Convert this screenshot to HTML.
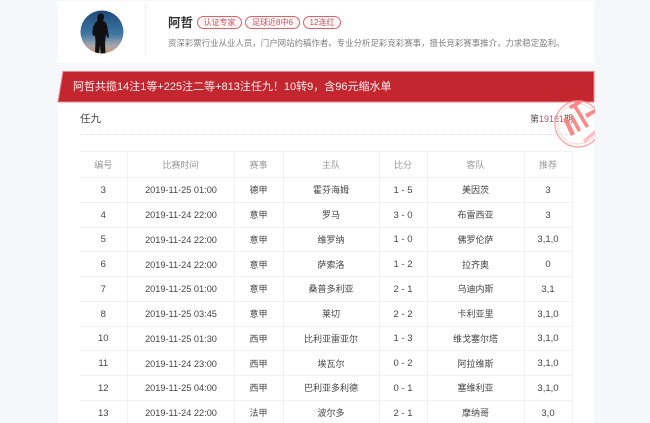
<!DOCTYPE html>
<html lang="zh">
<head>
<meta charset="utf-8">
<style>
html,body{margin:0;padding:0;width:650px;height:423px;overflow:hidden;background:#f6f7fb;}
body{position:relative;font-family:"Liberation Sans","Noto Sans CJK SC",sans-serif;color:#444;}
.abs{position:absolute;white-space:nowrap;}
.card{position:absolute;left:58px;top:1px;width:536px;background:#fff;}
.tag{position:absolute;top:16px;height:11px;line-height:11px;border:1px solid #d9636b;border-radius:7px;background:#fdf5f5;color:#c9565e;font-size:8px;text-align:center;white-space:nowrap;}
table{position:absolute;left:80px;top:151px;border-collapse:collapse;table-layout:fixed;width:492px;font-size:9px;color:#444;}
td,th{border:1px solid #f0f1f6;padding:1px 0 0;text-align:center;font-weight:normal;height:22.75px;line-height:14px;white-space:nowrap;overflow:hidden;}
td:nth-child(2){font-size:9.2px;padding-left:1px;}
td:nth-child(1),td:nth-child(5),td:nth-child(7){font-size:9.5px;padding-top:2px;height:21.75px;}
th{color:#999;height:24px;}
tr>*:first-child{border-left:none;}
</style>
</head>
<body>
<div class="card" style="height:62px;"></div>
<div class="card" style="top:102px;height:321px;"></div>
<div class="abs" style="left:145px;top:4px;height:54px;border-left:1px dotted #e6e6e6;"></div>

<svg class="abs" style="left:80px;top:10px" width="44" height="44" viewBox="0 0 44 44">
<defs>
<linearGradient id="g" x1="0" y1="0" x2="0" y2="1">
<stop offset="0" stop-color="#1d4a78"/>
<stop offset=".55" stop-color="#3f77a3"/>
<stop offset=".8" stop-color="#a3a6ad"/>
<stop offset="1" stop-color="#d79a6c"/>
</linearGradient>
<clipPath id="c"><circle cx="22" cy="22" r="21.500"/></clipPath>
</defs>
<g clip-path="url(#c)">
<rect width="44" height="44" fill="url(#g)"/>
<path d="M20 3.500C22 3 24 4 24 7C24 9 23 10 23 11C26 12 27 14 27.500 18L29 27L27.500 28L26 24L25 33L25.500 44H20.500L20 35L19 44H15L15.500 31L15 26C13 26 12 24 12.500 21C13 17 14 13 17 11.500C17.500 10 17 8 17.500 6C18 4.500 19 4 20 3.500Z" fill="#101013"/>
</g>
</svg>

<div class="abs" style="left:168px;top:13px;font-size:12.500px;font-weight:bold;line-height:20px;color:#333;">阿哲</div>
<div class="tag" style="left:197px;width:43px;">认证专家</div>
<div class="tag" style="left:245px;width:53px;">足球近8中6</div>
<div class="tag" style="left:303px;width:36px;">12连红</div>
<div class="abs" style="left:168px;top:36px;font-size:8.450px;line-height:14px;color:#808080;">资深彩票行业从业人员，门户网站约稿作者。专业分析足彩竞彩赛事，擅长竞彩赛事推介，力求稳定盈利。</div>

<svg class="abs" style="left:56px;top:70px" width="540" height="34" viewBox="0 0 540 34">
<path d="M7 1.500H538V32H2Z" fill="#c4262f" stroke="#e8858a" stroke-width="1"/>
</svg>
<div class="abs" style="left:73px;top:79px;font-size:11px;line-height:17px;color:#fdf2f2;">阿哲共揽14注1等+225注二等+813注任九！10转9，含96元缩水单</div>

<div class="abs" style="left:80px;top:111px;font-size:10.500px;line-height:17px;color:#444;">任九</div>
<div class="abs" style="left:530px;top:112px;font-size:9px;line-height:14px;color:#555;">第<span style="color:#b4536c">19161</span>期</div>
<div class="abs" style="left:80px;top:134px;width:492px;border-top:1px dotted #e2e2e2;"></div>

<svg class="abs" style="left:552px;top:97px" width="43" height="54" viewBox="0 0 43 54">
<circle cx="26" cy="27" r="23" fill="none" stroke="#fb9c9c" stroke-width="1.500" opacity=".85"/>
<circle cx="26" cy="27" r="20" fill="none" stroke="#fdcaca" stroke-width="1" opacity=".8"/>
<g fill="#fa7f7f" opacity=".92">
<path d="M17 9L28 3L29.500 6L25 9L37 29L34 31L22 11L18.500 12Z"/>
<path d="M11 22L15 20L23 37L19 39Z"/>
<path d="M18 20L21 18L29 33L26 35Z"/>
<path d="M33 17L43 12V16L35 21Z"/>
<path d="M31 43L43 33V37L33 46Z" opacity=".55"/>
</g>
</svg>

<table>
<colgroup>
<col style="width:47px"><col style="width:107px"><col style="width:49px"><col style="width:96px"><col style="width:48px"><col style="width:97px"><col style="width:48px">
</colgroup>
<tr><th>编号</th><th>比赛时间</th><th>赛事</th><th>主队</th><th>比分</th><th>客队</th><th>推荐</th></tr>
<tr><td>3</td><td>2019-11-25 01:00</td><td>德甲</td><td>霍芬海姆</td><td>1 - 5</td><td>美因茨</td><td>3</td></tr>
<tr><td>4</td><td>2019-11-24 22:00</td><td>意甲</td><td>罗马</td><td>3 - 0</td><td>布雷西亚</td><td>3</td></tr>
<tr><td>5</td><td>2019-11-24 22:00</td><td>意甲</td><td>维罗纳</td><td>1 - 0</td><td>佛罗伦萨</td><td>3,1,0</td></tr>
<tr><td>6</td><td>2019-11-24 22:00</td><td>意甲</td><td>萨索洛</td><td>1 - 2</td><td>拉齐奥</td><td>0</td></tr>
<tr><td>7</td><td>2019-11-25 01:00</td><td>意甲</td><td>桑普多利亚</td><td>2 - 1</td><td>乌迪内斯</td><td>3,1</td></tr>
<tr><td>8</td><td>2019-11-25 03:45</td><td>意甲</td><td>莱切</td><td>2 - 2</td><td>卡利亚里</td><td>3,1,0</td></tr>
<tr><td>10</td><td>2019-11-25 01:30</td><td>西甲</td><td>比利亚雷亚尔</td><td>1 - 3</td><td>维戈塞尔塔</td><td>3,1,0</td></tr>
<tr><td>11</td><td>2019-11-24 23:00</td><td>西甲</td><td>埃瓦尔</td><td>0 - 2</td><td>阿拉维斯</td><td>3,1,0</td></tr>
<tr><td>12</td><td>2019-11-25 04:00</td><td>西甲</td><td>巴利亚多利德</td><td>0 - 1</td><td>塞维利亚</td><td>3,1,0</td></tr>
<tr><td>13</td><td>2019-11-24 22:00</td><td>法甲</td><td>波尔多</td><td>2 - 1</td><td>摩纳哥</td><td>3,0</td></tr>
</table>
</body>
</html>
